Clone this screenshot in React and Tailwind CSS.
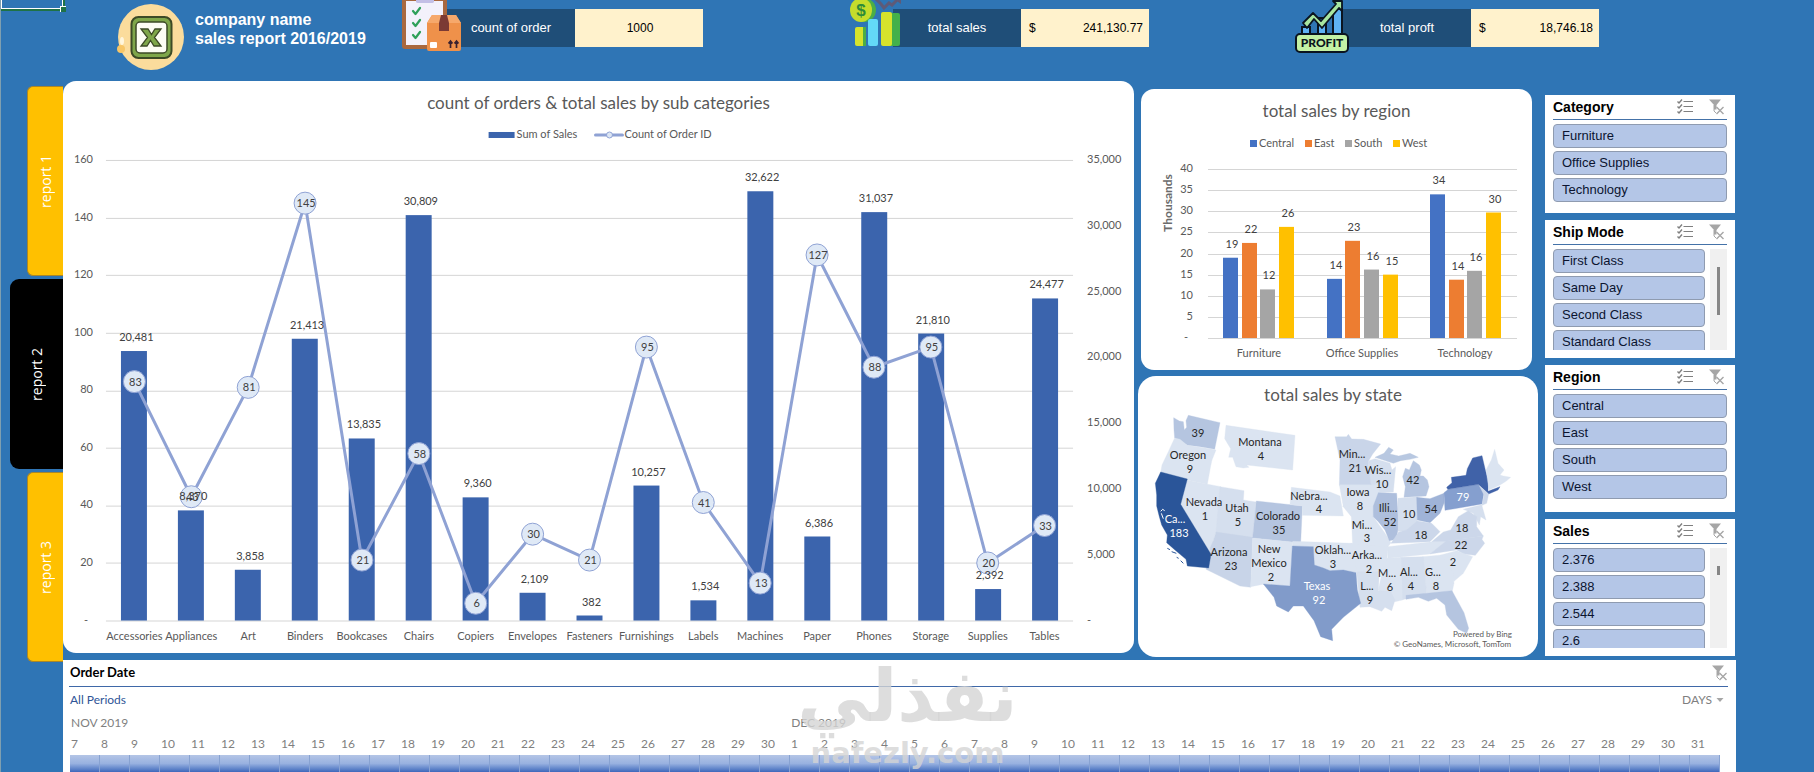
import React from "react";

const SANS = "font-['Liberation_Sans',Arial,sans-serif]";

/* ---------- header icons ---------- */

function LogoIcon() {
  return (
    <svg className="h-[68px] w-[68px] shrink-0" viewBox="0 0 68 68" aria-hidden="true">
      <circle cx="35" cy="34" r="33" fill="#fbdc9c" />
      <ellipse cx="6" cy="38" rx="2" ry="4" fill="#fff6dd" />
      <circle cx="5" cy="46" r="4" fill="#f7c667" />
      <rect x="15.500" y="14" width="40" height="41" rx="7" fill="#7fa64a" stroke="#3d4a26" strokeWidth="2" />
      <rect x="20" y="19" width="31" height="31" rx="4" fill="#fdfdf4" stroke="#3d4a26" strokeWidth="1.500" />
      <path
        d="M25 26h7l3.500 5.500L39 26h6l-6.500 8.500L45 43h-7l-3.500-5.500L31 43h-6l6.500-8.500z"
        fill="#7fa64a"
        stroke="#3d4a26"
        strokeWidth="1.300"
      />
    </svg>
  );
}

function OrdersIcon() {
  return (
    <svg className="relative -mr-[15px] h-[52px] w-[60px] shrink-0" viewBox="0 0 60 52" aria-hidden="true">
      <rect x="0" y="-8" width="45" height="57" rx="3" fill="#a9683f" />
      <rect x="4" y="1" width="37" height="44" fill="#f3f1fb" />
      <path d="M14 -2h18v4a2 2 0 0 1-2 1H16a2 2 0 0 1-2-1z" fill="#c3bfe6" />
      <g fill="none" stroke="#2fa05a" strokeWidth="2.200" strokeLinecap="round" strokeLinejoin="round">
        <path d="M11 11l2.500 3L18 8" />
        <path d="M11 23l2.500 3L18 20" />
        <path d="M11 35l2.500 3L18 32" />
      </g>
      <path d="M25 23l5-8h24l5 8v26a2 2 0 0 1-2 2H27a2 2 0 0 1-2-2z" fill="#ef914a" />
      <path d="M25 23l5-8h24l5 8z" fill="#f6a86b" />
      <path d="M39 15h6l2 8v8H37v-8z" fill="#7b3a34" />
      <rect x="28" y="42" width="7" height="6" rx="1" fill="#fff" />
      <path d="M48.500 48v-6M46.500 43.500l2-2.500 2 2.500M54.500 48v-6M52.500 43.500l2-2.500 2 2.500" fill="none" stroke="#3a2230" strokeWidth="1.700" />
    </svg>
  );
}

function SalesIcon() {
  return (
    <svg className="relative -mr-[8px] h-[52px] w-[52px] shrink-0" viewBox="0 0 52 52" aria-hidden="true">
      <path d="M27 -1l5 5 3 4 5-5 3 2 8-8" fill="none" stroke="#5e5a78" strokeWidth="3" />
      <path d="M45 -1h7v5z" fill="#5e5a78" />
      <circle cx="15" cy="10" r="12" fill="#4cae45" />
      <ellipse cx="12" cy="10" rx="11" ry="12" fill="#c5dc2c" />
      <text x="12" y="16" textAnchor="middle" fontSize="17" fontWeight="700" fill="#2e8a3a" fontFamily="Liberation Sans">
        $
      </text>
      <rect x="6" y="27" width="10" height="19" rx="2" fill="#d6e32c" />
      <rect x="14" y="27" width="3" height="19" fill="#4cae45" />
      <rect x="19" y="19" width="10" height="27" rx="2" fill="#63d9f7" />
      <rect x="40" y="13" width="11" height="33" rx="2" fill="#43b04a" />
      <rect x="32" y="12" width="11" height="34" rx="2" fill="#d6e32c" />
    </svg>
  );
}

function ProfitIcon() {
  return (
    <svg className="relative -mr-[6px] h-[53px] w-[54px] shrink-0" viewBox="0 0 54 53" aria-hidden="true">
      <g fill="#5fb2f5" stroke="#0b1420" strokeWidth="2">
        <rect x="7" y="27" width="8" height="12" />
        <rect x="23" y="18" width="8" height="20" />
        <rect x="38" y="9" width="9" height="30" />
      </g>
      <path d="M8 23L18 13l8 8L41 4l-3-3h9v10l-3-3-17 20-8-9-7 9z" fill="#a8e6a0" stroke="#0b1420" strokeWidth="1.800" strokeLinejoin="round" />
      <rect x="1" y="34" width="52" height="18" rx="4" fill="#c3f1a5" stroke="#0b1420" strokeWidth="2" />
      <text x="27" y="47" textAnchor="middle" fontSize="12" fontWeight="900" fill="#0b1420" fontFamily="Lato">
        PROFIT
      </text>
    </svg>
  );
}

/* ---------- slicer icons ---------- */

function MultiSelectIcon() {
  return (
    <svg className="h-4 w-4" viewBox="0 0 16 16" fill="none" stroke="#7f7f7f" aria-hidden="true">
      <path d="M6.500 2.500H16M6.500 7.500H16M6.500 12.500H16" strokeWidth="1" />
      <path d="M0.500 2.500l1.500 1.500L5 0.500M0.500 7.500L2 9l3-3.500M0.500 12.500L2 14l3-3.500" strokeWidth="1.400" />
    </svg>
  );
}

function ClearFilterIcon() {
  return (
    <svg className="h-4 w-4" viewBox="0 0 16 16" fill="none" aria-hidden="true">
      <path d="M0 0.500h12L7.500 6v4.500H5V6z" fill="#a6a6a6" />
      <path d="M5 6v6l2 2" stroke="#a6a6a6" />
      <path d="M7.500 8l7 7M14.500 8l-7 7" stroke="#a6a6a6" strokeWidth="1.400" />
    </svg>
  );
}

/* ---------- KPI tiles ---------- */

function Kpi({ icon, label, value, currency }) {
  return (
    <div className="flex items-start">
      {icon}
      <div className="mt-[9px] flex h-[38px]">
        <div className="flex w-32 items-center justify-center bg-[#1f4e78] text-[13px] text-white">{label}</div>
        <div
          className={
            "flex w-32 items-center bg-[#fff2cc] pl-2 pr-[6px] text-[12px] text-black " +
            (currency ? "justify-between" : "justify-center")
          }
        >
          {currency && <span>$</span>}
          <span>{value}</span>
        </div>
      </div>
    </div>
  );
}

/* ---------- charts ---------- */

function T({ x, y, children, anchor = "middle", fill = "#595959", size = 11, weight }) {
  return (
    <text x={x} y={y + 4} textAnchor={anchor} fontSize={size} fill={fill} fontWeight={weight}>
      {children}
    </text>
  );
}

const SUB = [
  ["Accessories", 20481, 83],
  ["Appliances", 8370, 43],
  ["Art", 3858, 81],
  ["Binders", 21413, 145],
  ["Bookcases", 13835, 21],
  ["Chairs", 30809, 58],
  ["Copiers", 9360, 6],
  ["Envelopes", 2109, 30],
  ["Fasteners", 382, 21],
  ["Furnishings", 10257, 95],
  ["Labels", 1534, 41],
  ["Machines", 32622, 13],
  ["Paper", 6386, 127],
  ["Phones", 31037, 88],
  ["Storage", 21810, 95],
  ["Supplies", 2392, 20],
  ["Tables", 24477, 33],
];

function SubCategoryChart() {
  const left = 43;
  const right = 1011;
  const base = 496;
  const height = 461;
  const step = (right - left) / SUB.length;
  const cx = (i) => left + step * (i + 0.5);
  const barH = (v) => (v / 35000) * height;
  const ly = (v) => base - (v / 160) * height;
  return (
    <svg className="block h-auto w-full" viewBox="0 0 1072 528" role="img" aria-label="count of orders and total sales by sub categories">
      <rect x="426" y="7" width="26" height="6" fill="#3b64ad" />
      <T x={454} y={9} anchor="start">Sum of Sales</T>
      <path d="M533 10h27" stroke="#8fa2d4" strokeWidth="3" strokeLinecap="round" />
      <circle cx="547" cy="10" r="3" fill="#dce6f4" stroke="#8fa2d4" />
      <T x={562} y={9} anchor="start">Count of Order ID</T>
      {[0, 20, 40, 60, 80, 100, 120, 140, 160].map((v) => (
        <g key={v}>
          <path d={`M${left} ${Math.round(ly(v)) + 0.5}H${right}`} stroke="#d5d5d5" />
          <T x={v ? 30 : 25} y={ly(v) - 1} anchor="end">{v || "-"}</T>
        </g>
      ))}
      {[0, 5000, 10000, 15000, 20000, 25000, 30000, 35000].map((v) => (
        <T key={v} x={1025} y={base - barH(v) - 1} anchor="start">{v ? v.toLocaleString("en-US") : "-"}</T>
      ))}
      {SUB.map(([n, v], i) => (
        <rect key={n} x={Math.round(cx(i) - 13)} y={base - barH(v)} width="26" height={barH(v)} fill="#3b64ad" />
      ))}
      <polyline points={SUB.map((d, i) => `${cx(i)},${ly(d[2])}`).join(" ")} fill="none" stroke="#8fa2d4" strokeWidth="3" strokeLinejoin="round" />
      {SUB.map((d, i) => (
        <circle key={d[0]} cx={cx(i)} cy={ly(d[2])} r="11" fill="#dfe9f6" stroke="#8fa2d4" />
      ))}
      {SUB.map(([n, v, c], i) => (
        <g key={n}>
          <T x={cx(i) + 2} y={base - barH(v) - 14} fill="#404040">{v.toLocaleString("en-US")}</T>
          <T x={cx(i) + 1} y={ly(c)} fill="#404040">{c}</T>
          <T x={cx(i)} y={511}>{n}</T>
        </g>
      ))}
    </svg>
  );
}

const REGION_COLORS = [
  ["Central", "#4472c4", 109],
  ["East", "#ed7d31", 164],
  ["South", "#a5a5a5", 204],
  ["West", "#ffc000", 252],
];
const REGION_DATA = [
  ["Furniture", [19, 22.5, 11.5, 26.3], [19, 22, 12, 26]],
  ["Office Supplies", [14, 23, 16.2, 15], [14, 23, 16, 15]],
  ["Technology", [34, 13.8, 15.9, 29.7], [34, 14, 16, 30]],
];

function RegionChart() {
  const base = 205;
  const u = 169 / 40;
  return (
    <svg className="block h-auto w-full" viewBox="0 0 391 237" role="img" aria-label="total sales by region">
      {REGION_COLORS.map(([n, c, x]) => (
        <g key={n}>
          <rect x={x} y="7" width="7" height="7" fill={c} />
          <T x={x + 9} y={10} anchor="start">{n}</T>
        </g>
      ))}
      <text transform="translate(31 70) rotate(-90)" textAnchor="middle" fontSize="12" fontWeight="700" fill="#6b6b6b">
        Thousands
      </text>
      {[0, 5, 10, 15, 20, 25, 30, 35, 40].map((v) => (
        <g key={v}>
          <path d={`M67 ${Math.round(base - v * u) + 0.5}H376`} stroke="#d5d5d5" />
          <T x={v ? 52 : 47} y={base - v * u - 1} anchor="end">{v || "-"}</T>
        </g>
      ))}
      {REGION_DATA.map(([n, vals, labels], g) => (
        <g key={n}>
          {vals.map((v, i) => {
            const x = Math.round(82 + g * 103.5 + i * 18.7);
            return (
              <g key={i}>
                <rect x={x} y={base - v * u} width="15" height={v * u} fill={REGION_COLORS[i][1]} />
                <T x={x + 9} y={base - v * u - 14} fill="#404040">{labels[i]}</T>
              </g>
            );
          })}
          <T x={118 + g * 103} y={220}>{n}</T>
        </g>
      ))}
    </svg>
  );
}

const L1 = "#dbe4f1";
const L2 = "#d5dfee";
const STATES = [
  ["#b5c5e0", "131,143 148,153 160,155 163,180 170,172 168,152 175,136 270,158 254,238 220,232 200,229 172,226 150,212 134,204 132,180"],
  [L1, "134,204 150,208 172,226 240,236 258,240 246,270 242,288 232,343 170,330 92,308 96,285 115,245"],
  [L1, "168,330 272,350 264,487 256,490 250,512 243,553 152,403"],
  [L2, "270,350 342,362 340,390 378,396 368,504 258,488"],
  ["#c8d4e8", "258,486 368,502 362,652 330,648 228,598 243,553 240,535 250,512"],
  ["#b5c5e0", "379,393 517,408 512,519 368,504"],
  [L1, "368,504 488,516 480,648 404,642 362,650"],
  [L1, "288,166 495,196 488,300 350,285 357,292 340,294 318,290 308,262 296,262 302,236 284,206"],
  [L1, "484,352 600,366 630,378 640,438 517,436 517,408 480,404"],
  ["#c9d5e9", "615,200 650,200 655,193 665,207 700,208 752,222 728,252 716,272 716,300 742,330 742,346 628,346 630,270"],
  [L2, "716,272 735,266 780,280 786,300 797,290 790,366 745,368 722,340"],
  ["#b8c8e1", "735,262 762,250 776,232 790,240 780,252 806,258 840,250 865,262 840,268 812,272 790,280"],
  ["#b5c5e0", "850,272 868,285 874,300 870,318 880,318 892,330 897,350 888,378 822,382 826,350 818,320 826,295 838,300"],
  [L1, "628,344 744,344 750,380 735,412 640,410"],
  [L1, "638,408 735,410 730,440 765,490 783,518 770,535 668,525 664,440"],
  ["#aebfdd", "745,368 800,370 806,470 798,508 778,512 765,480 745,455 730,440 730,408"],
  [L2, "804,385 862,380 862,455 830,482 804,484"],
  ["#9fb3d7", "860,382 900,386 942,370 942,400 930,430 900,458 862,450"],
  ["#ccd7ea", "783,520 806,486 830,480 862,453 905,460 930,485 900,515"],
  [L1, "773,530 900,516 955,512 900,552 773,565"],
  ["#859fcf", "942,368 955,358 1045,343 1062,365 1056,402 945,421"],
  ["#4062a8", "950,352 966,338 964,322 1008,316 1012,296 1028,264 1056,257 1066,300 1075,330 1074,364 1110,350 1104,360 1076,372 1045,343 953,358"],
  [L1, "1068,300 1084,270 1094,238 1104,280 1122,300 1110,315 1120,318 1142,322 1128,334 1110,345 1077,360"],
  ["#ccd7ea", "1048,347 1076,372 1070,400 1056,406 1062,375"],
  [L2, "1000,418 1055,404 1068,450 1052,440 1048,465 1030,430"],
  ["#ccd7ea", "905,515 940,486 962,480 985,440 1015,422 1040,440 1040,470 1060,498 948,514"],
  ["#ccd7ea", "950,512 1060,498 1056,508 1064,520 1036,556 1000,552 980,540 900,552"],
  [L1, "930,556 980,542 1028,560 1000,610 972,634"],
  [L1, "878,560 935,555 970,610 972,640 966,668 890,670"],
  [L2, "812,562 880,560 890,670 815,690"],
  [L1, "765,565 813,562 817,690 795,695 780,690 745,660"],
  [L1, "662,520 775,532 765,605 680,608"],
  [L2, "680,605 748,605 745,662 782,664 795,690 785,722 765,712 755,724 720,710 690,712"],
  [L1, "488,514 666,520 682,608 600,602 552,585 550,530 488,528"],
  ["#819bca", "487,528 550,530 553,585 580,594 600,602 640,600 678,608 682,660 692,700 640,742 605,778 608,812 572,800 552,752 520,708 490,708 475,726 440,708 432,682 400,642 480,648"],
  ["#b5c5e0", "828,676 890,670 966,662 1002,728 1016,775 1010,790 985,778 950,735 945,705 920,685 895,694 865,682 828,688"],
  ["#2a5599", "92,306 172,327 152,403 243,553 236,594 172,588 168,568 135,540 110,518 112,495 95,465 88,440 80,408 80,375 76,340"],
];

const MAP_LABELS = [
  [205, 190, "39"], [391, 215, "Montana"], [394, 257, "4"], [175, 254, "Oregon"], [179, 296, "9"],
  [223, 395, "Nevada"], [226, 437, "1"], [320, 413, "Utah"], [323, 455, "5"], [443, 437, "Colorado"], [447, 479, "35"],
  [538, 377, "Nebra..."], [566, 418, "4"], [666, 251, "Min..."], [674, 293, "21"], [745, 299, "Wis..."], [757, 341, "10"],
  [849, 329, "42"], [685, 365, "Iowa"], [689, 407, "8"], [775, 413, "Illi..."], [781, 455, "52"], [836, 433, "10"],
  [904, 416, "54"], [1000, 382, "79", "#fff"], [697, 464, "Mi..."], [711, 505, "3"], [874, 494, "18"], [995, 475, "18"], [994, 526, "22"],
  [298, 545, "Arizona"], [303, 587, "23"], [418, 536, "New"], [418, 578, "Mexico"], [422, 620, "2"],
  [608, 540, "Oklah..."], [609, 581, "3"], [712, 554, "Arka..."], [717, 596, "2"], [968, 577, "2"],
  [772, 610, "M..."], [781, 652, "6"], [838, 605, "Al..."], [844, 647, "4"], [910, 605, "G..."], [917, 647, "8"],
  [712, 648, "L..."], [719, 689, "9"], [562, 647, "Texas", "#fff"], [566, 689, "92", "#fff"],
  [134, 446, "Ca...", "#fff"], [148, 488, "183", "#fff"],
];

function StateMap() {
  return (
    <svg className="block h-auto w-full" viewBox="0 0 400 243" role="img" aria-label="total sales by state">
      <g transform="scale(0.33333) translate(-24 -132)">
        {STATES.map(([c, p]) => (
          <polygon key={p} points={p} fill={c} stroke={c} strokeWidth="1" />
        ))}
        <path d="M112 535l8 4M125 545l14 5M140 562l6 3M152 572l8 8" stroke="#2a5599" strokeWidth="3" />
        <path d="M92 424l6-6 6 4M94 430l6 16" stroke="#fff" strokeWidth="3" fill="none" />
      </g>
      {MAP_LABELS.map(([x, y, s, f]) => (
        <T key={`${x}-${y}`} x={Math.round((x - 24) / 3)} y={Math.round((y - 132) / 3)} fill={f || "#262626"}>
          {s}
        </T>
      ))}
      <T x={374} y={219} anchor="end" size={8}>Powered by Bing</T>
      <T x={373} y={229} anchor="end" size={8}>© GeoNames, Microsoft, TomTom</T>
    </svg>
  );
}

/* ---------- slicers ---------- */

function Slicer({ title, items, listClass, thumbClass }) {
  return (
    <section className={"bg-white px-2 " + SANS}>
      <header className="flex h-[25px] items-center border-b border-[#4472a8]">
        <h3 className="flex-1 text-[14px] font-bold text-black">{title}</h3>
        <button type="button" aria-label={"Multi-select " + title} className="mr-4">
          <MultiSelectIcon />
        </button>
        <button type="button" aria-label={"Clear filter " + title} className="mr-[2px]">
          <ClearFilterIcon />
        </button>
      </header>
      <div className={"mt-1 flex gap-[5px] overflow-hidden " + listClass}>
        <div className="flex flex-1 flex-col gap-[3px]">
          {items.map((it) => (
            <button
              key={it}
              type="button"
              className="h-6 shrink-0 rounded-[4px] border border-[#8f9bb0] bg-[#b4c6e7] pl-2 text-left text-[13px] leading-[22px] text-[#0b1430]"
            >
              {it}
            </button>
          ))}
        </div>
        {thumbClass && (
          <div className="flex w-[17px] justify-center bg-[#f0f0f0] pt-[18px]">
            <div className={"w-[3px] bg-[#868686] " + thumbClass} />
          </div>
        )}
      </div>
    </section>
  );
}

/* ---------- timeline ---------- */

const DAYS = [
  ...Array.from({ length: 24 }, (_, i) => ["NOV", i + 7]),
  ...Array.from({ length: 31 }, (_, i) => ["DEC", i + 1]),
];

function Timeline() {
  return (
    <section className="bg-white pl-[6px] pr-2">
      <header className="flex h-[27px] items-center border-b border-[#3f68a8] pl-px">
        <h3 className="flex-1 text-[13px] font-bold text-black">Order Date</h3>
        <button type="button" aria-label="Clear filter Order Date">
          <ClearFilterIcon />
        </button>
      </header>
      <div className="flex h-[26px] items-center justify-between pl-px text-[12px]">
        <span className="text-[#2f5597]">All Periods</span>
        <button type="button" className="mr-1 flex items-center gap-1 text-[12px] text-[#7f7f7f]">
          DAYS
          <svg className="h-2 w-2" viewBox="0 0 8 8" aria-hidden="true">
            <path d="M0.500 2h7L4 6z" fill="#a6a6a6" />
          </svg>
        </button>
      </div>
      <div className="pr-2 pl-px">
        <div className="flex h-5 text-[12px] leading-5 text-[#7f7f7f]">
          <span className="flex-[24] basis-0 pl-px">NOV 2019</span>
          <span className="flex-[31] basis-0 pl-px">DEC 2019</span>
        </div>
        <div className="flex h-[22px] text-[12px] leading-[22px] text-[#7f7f7f]">
          {DAYS.map(([m, d]) => (
            <span key={m + d} className="flex-1 basis-0 pl-px">{d}</span>
          ))}
        </div>
        <div className="flex h-[17px] bg-linear-to-b from-[#b4c5e6] via-[#98b1e0] to-[#3f68bb]">
          {DAYS.map(([m, d]) => (
            <span key={m + d} className="flex-1 basis-0 border-r border-[#87a2d2]" />
          ))}
        </div>
      </div>
    </section>
  );
}

function Tab({ children, active }) {
  return (
    <a
      href="#"
      className={
        "flex h-[190px] items-center justify-center text-[14px] text-white " +
        (active
          ? "w-[53px] rounded-l-[9px] bg-black"
          : "w-9 rounded-l-[6px] border border-r-0 border-[#a8862a] bg-[#ffc000]")
      }
    >
      <span className="rotate-180 font-['Open_Sans',sans-serif] [writing-mode:vertical-rl]">{children}</span>
    </a>
  );
}

const cardTitle = "text-center text-[17px] text-[#595959]";

export default function App() {
  return (
    <div className="relative flex min-h-screen flex-col overflow-hidden border-l border-[#7f9fb0] bg-[#2f75b5] font-['Lato',sans-serif]">
      <div className="absolute left-0 top-0 h-[11px] w-16 border-b-2 border-r-2 border-[#1f7246]">
        <div className="h-full border-b border-l border-r border-white" />
        <div className="absolute -bottom-[3px] -right-[3px] h-[6px] w-[6px] border-l border-t border-white bg-[#1f7246]" />
      </div>

      <header className={"flex h-[81px] items-start " + SANS}>
        <div className="flex w-[401px] shrink-0 items-start gap-[11px] pl-[115px] pt-[3px]">
          <LogoIcon />
          <h1 className="whitespace-nowrap pt-[7px] text-[16px] font-bold leading-[19px] text-white">
            company name
            <br />
            sales report 2016/2019
          </h1>
        </div>
        <div className="flex flex-1 justify-between pr-[215px]">
          <Kpi icon={<OrdersIcon />} label="count of order" value="1000" />
          <Kpi icon={<SalesIcon />} label="total sales" value="241,130.77" currency />
          <Kpi icon={<ProfitIcon />} label="total proft" value="18,746.18" currency />
        </div>
      </header>

      <div className="flex flex-1">
        <nav className="flex w-[62px] shrink-0 flex-col items-end gap-[3px] pt-[5px]" aria-label="Reports">
          <Tab>report 1</Tab>
          <Tab active>report 2</Tab>
          <Tab>report 3</Tab>
        </nav>

        <main className="flex min-w-0 flex-1 flex-col gap-[3px] pr-[78px]">
          <div className="flex items-start pr-px">
            <section className="min-w-0 flex-[1071] basis-0 rounded-[13px] bg-white">
              <h2 className={cardTitle + " leading-[44px]"}>count of orders &amp; total sales by sub categories</h2>
              <SubCategoryChart />
            </section>

            <div className="ml-1 mr-[7px] flex min-w-0 flex-[400] basis-0 flex-col gap-[6px] pt-2">
              <section className="ml-[3px] mr-[6px] rounded-[13px] bg-white">
                <h2 className={cardTitle + " leading-[44px]"}>total sales by region</h2>
                <RegionChart />
              </section>
              <section className="rounded-[18px] bg-white">
                <h2 className={cardTitle + " pr-[10px] leading-[38px]"}>total sales by state</h2>
                <StateMap />
              </section>
            </div>

            <div className="flex w-[190px] shrink-0 flex-col gap-[7px] pt-[14px]">
              <Slicer title="Category" items={["Furniture", "Office Supplies", "Technology"]} listClass="mb-[11px]" />
              <Slicer
                title="Ship Mode"
                items={["First Class", "Same Day", "Second Class", "Standard Class"]}
                listClass="mb-2 h-[101px]"
                thumbClass="h-12"
              />
              <Slicer title="Region" items={["Central", "East", "South", "West"]} listClass="mb-[13px]" />
              <Slicer title="Sales" items={["2.376", "2.388", "2.544", "2.6"]} listClass="mb-2 h-[100px]" thumbClass="h-[9px]" />
            </div>
          </div>
          <Timeline />
        </main>
      </div>

      <div className="pointer-events-none absolute inset-x-0 bottom-0 flex flex-col items-center font-bold text-[#d4d4d4]/80">
        <span lang="ar" dir="rtl" className="font-['DejaVu_Sans',sans-serif] text-[72px] leading-[76px]">
          نفذلي
        </span>
        <span className="font-['DejaVu_Sans',sans-serif] text-[29px] leading-[38px]">nafezly.com</span>
      </div>
    </div>
  );
}
